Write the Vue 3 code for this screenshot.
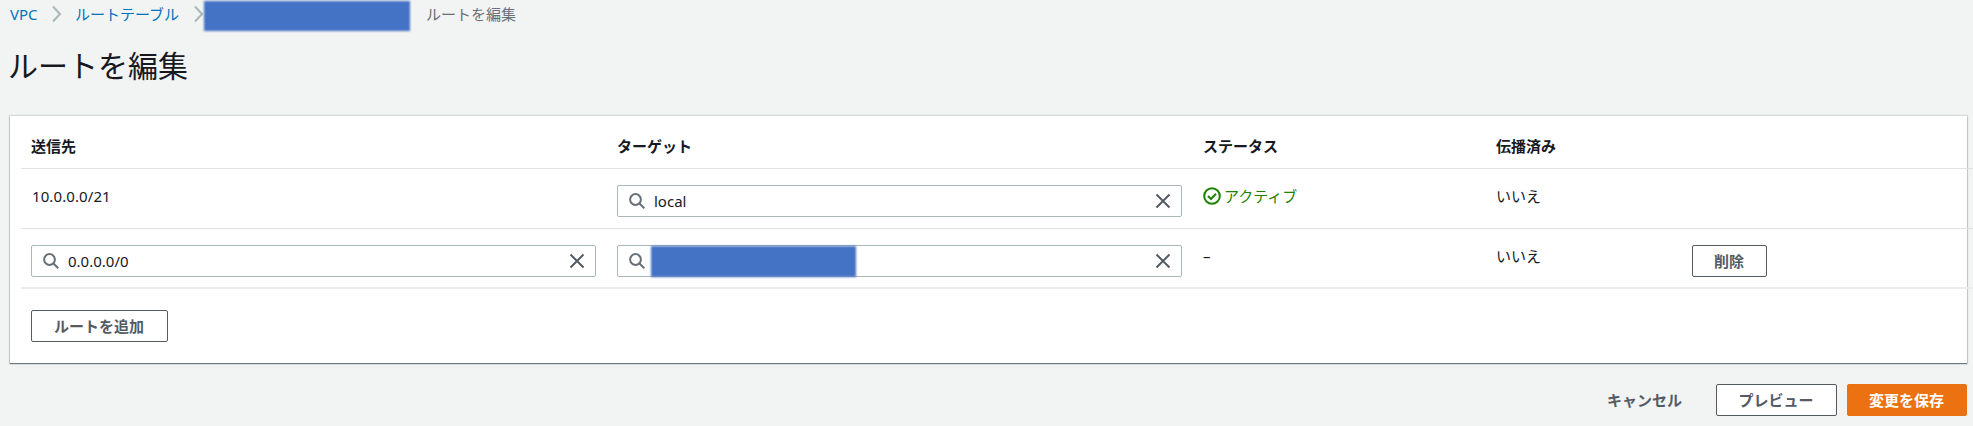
<script setup>
import { reactive } from 'vue';

const columns = ['送信先', 'ターゲット', 'ステータス', '伝播済み', ''];

const routes = reactive([
  { destination: '10.0.0.0/21', target: 'local', active: true, propagated: 'いいえ', fixed: true },
  { destination: '0.0.0.0/0', target: '', active: false, propagated: 'いいえ', fixed: false },
]);

function addRoute() {
  routes.push({ destination: '', target: '', active: false, propagated: 'いいえ', fixed: false });
}

function removeRoute(index) {
  routes.splice(index, 1);
}
</script>

<template>
  <div class="page">
    <nav class="breadcrumb">
      <a class="first">VPC</a>
      <svg class="chevron" viewBox="0 0 10 18"><path d="M1 1.5 8 9 1 16.5" /></svg>
      <a class="second">ルートテーブル</a>
      <svg class="chevron" viewBox="0 0 10 18"><path d="M1 1.5 8 9 1 16.5" /></svg>
      <span class="mask crumb-mask"></span>
      <span class="current">ルートを編集</span>
    </nav>

    <h1>ルートを編集</h1>

    <section class="card">
      <div class="row head">
        <div v-for="(col, i) in columns" :key="i" class="cell">{{ col }}</div>
      </div>

      <div v-for="(route, index) in routes" :key="index" class="row body">
        <div class="cell">
          <div v-if="route.fixed" class="text cidr">{{ route.destination }}</div>
          <div v-else class="field">
            <svg class="search" viewBox="0 0 16 16"><circle cx="6.5" cy="6.5" r="5.4" /><path d="m10.5 10.5 4.8 4.8" /></svg>
            <input v-model="route.destination" />
            <svg class="clear" viewBox="0 0 16 16" @click="route.destination = ''"><path d="m1.5 1.5 13 13M14.5 1.5l-13 13" /></svg>
          </div>
        </div>
        <div class="cell">
          <div class="field">
            <svg class="search" viewBox="0 0 16 16"><circle cx="6.5" cy="6.5" r="5.4" /><path d="m10.5 10.5 4.8 4.8" /></svg>
            <input v-if="route.fixed" v-model="route.target" />
            <span v-else class="mask target-mask"></span>
            <svg class="clear" viewBox="0 0 16 16" @click="route.target = ''"><path d="m1.5 1.5 13 13M14.5 1.5l-13 13" /></svg>
          </div>
        </div>
        <div class="cell">
          <div v-if="route.active" class="text status">
            <svg viewBox="0 0 18 18"><circle cx="9" cy="9" r="7.8" /><path d="m5 9 3 3 5-5.2" /></svg>
            <span>アクティブ</span>
          </div>
          <div v-else class="text">–</div>
        </div>
        <div class="cell">
          <div class="text">{{ route.propagated }}</div>
        </div>
        <div class="cell">
          <button v-if="!route.fixed" class="btn delete" @click="removeRoute(index)">削除</button>
        </div>
      </div>

      <button class="btn add" @click="addRoute">ルートを追加</button>
    </section>

    <footer class="actions">
      <button class="btn link">キャンセル</button>
      <button class="btn preview">プレビュー</button>
      <button class="btn primary">変更を保存</button>
    </footer>
  </div>
</template>

<style>
body {
  background: #f2f3f3;
}
</style>

<style scoped>
.page {
  box-sizing: border-box;
  height: 426px;
  padding: 0 6px 0 10px;
  overflow: hidden;
  background: #f2f3f3;
  color: #16191f;
  font-family: "Noto Sans", "Noto Sans CJK JP", sans-serif;
  font-size: 15px;
  line-height: 24px;
}
.breadcrumb {
  display: flex;
  align-items: center;
  height: 27px;
  white-space: nowrap;
}
.breadcrumb a {
  color: #0073bb;
}
.first {
  width: 42px;
}
.second {
  width: 105px;
  margin: 0 14px 0 13px;
}
.chevron {
  flex: none;
  width: 10px;
  height: 18px;
  fill: none;
  stroke: #aab7b8;
  stroke-width: 2;
}
.current {
  margin-left: 16px;
  color: #687078;
}
.mask {
  flex: none;
  background: #4472c4;
  filter: blur(1px);
}
.crumb-mask {
  width: 206px;
  height: 30px;
  margin: 5px 0 0;
}
h1 {
  height: 89px;
  margin: 0 0 0 -2px;
  font-size: 30px;
  font-weight: 400;
  line-height: 77px;
}
.card {
  box-sizing: border-box;
  height: 247px;
  padding-left: 11px;
  background: #fff;
  box-shadow: 0 1px 1px 0 rgba(0, 28, 36, 0.5), 0 0 1px 1px rgba(0, 28, 36, 0.12);
}
.row {
  display: grid;
  grid-template-columns: 586px 586px 293px 196px 291px;
  box-sizing: border-box;
  width: 1952px;
  border-bottom: 1px solid #dfe2e2;
}
.head {
  height: 53px;
  font-weight: 700;
  line-height: 61px;
}
.body {
  height: 60px;
  padding-top: 16px;
}
.row:nth-child(3) {
  border-bottom: 2px solid #eaeded;
}
.cell {
  padding-left: 10px;
}
.text {
  line-height: 22px;
}
.cidr {
  padding-left: 1px;
  letter-spacing: 0.1px;
}
.field {
  display: flex;
  align-items: center;
  box-sizing: border-box;
  width: 565px;
  height: 32px;
  padding: 0 10px 0 11px;
  border: 1px solid #aab7b8;
  border-radius: 2px;
}
.field input {
  flex: 1;
  min-width: 0;
  padding: 0;
  margin-left: 9px;
  border: 0;
  outline: 0;
  background: none;
  color: #16191f;
  font: inherit;
}
.search,
.clear {
  flex: none;
  width: 16px;
  height: 16px;
  fill: none;
  stroke: #687078;
  stroke-width: 2;
}
.clear {
  margin-left: auto;
  stroke: #545b64;
}
.target-mask {
  width: 205px;
  height: 31px;
  margin-left: 6px;
}
.status {
  display: flex;
  align-items: center;
  gap: 3px;
  color: #1d8102;
}
.status svg {
  width: 18px;
  height: 18px;
  fill: none;
  stroke: #1d8102;
  stroke-width: 2;
}
.btn {
  box-sizing: border-box;
  height: 32px;
  padding: 0 1px 0 0;
  border: 1px solid #545b64;
  border-radius: 2px;
  background: #fff;
  color: #545b64;
  font: inherit;
  font-weight: 600;
  line-height: 28px;
  white-space: nowrap;
}
.delete {
  width: 75px;
}
.add {
  width: 137px;
  margin: 21px 0 0 10px;
}
.actions {
  display: flex;
  justify-content: flex-end;
  padding-top: 21px;
}
.link {
  width: 80px;
  margin-right: 31px;
  border-color: transparent;
  background: none;
}
.preview {
  width: 121px;
  margin-right: 10px;
}
.primary {
  width: 120px;
  border-color: #ec7211;
  background: #ec7211;
  color: #fff;
  font-weight: 700;
}
</style>
